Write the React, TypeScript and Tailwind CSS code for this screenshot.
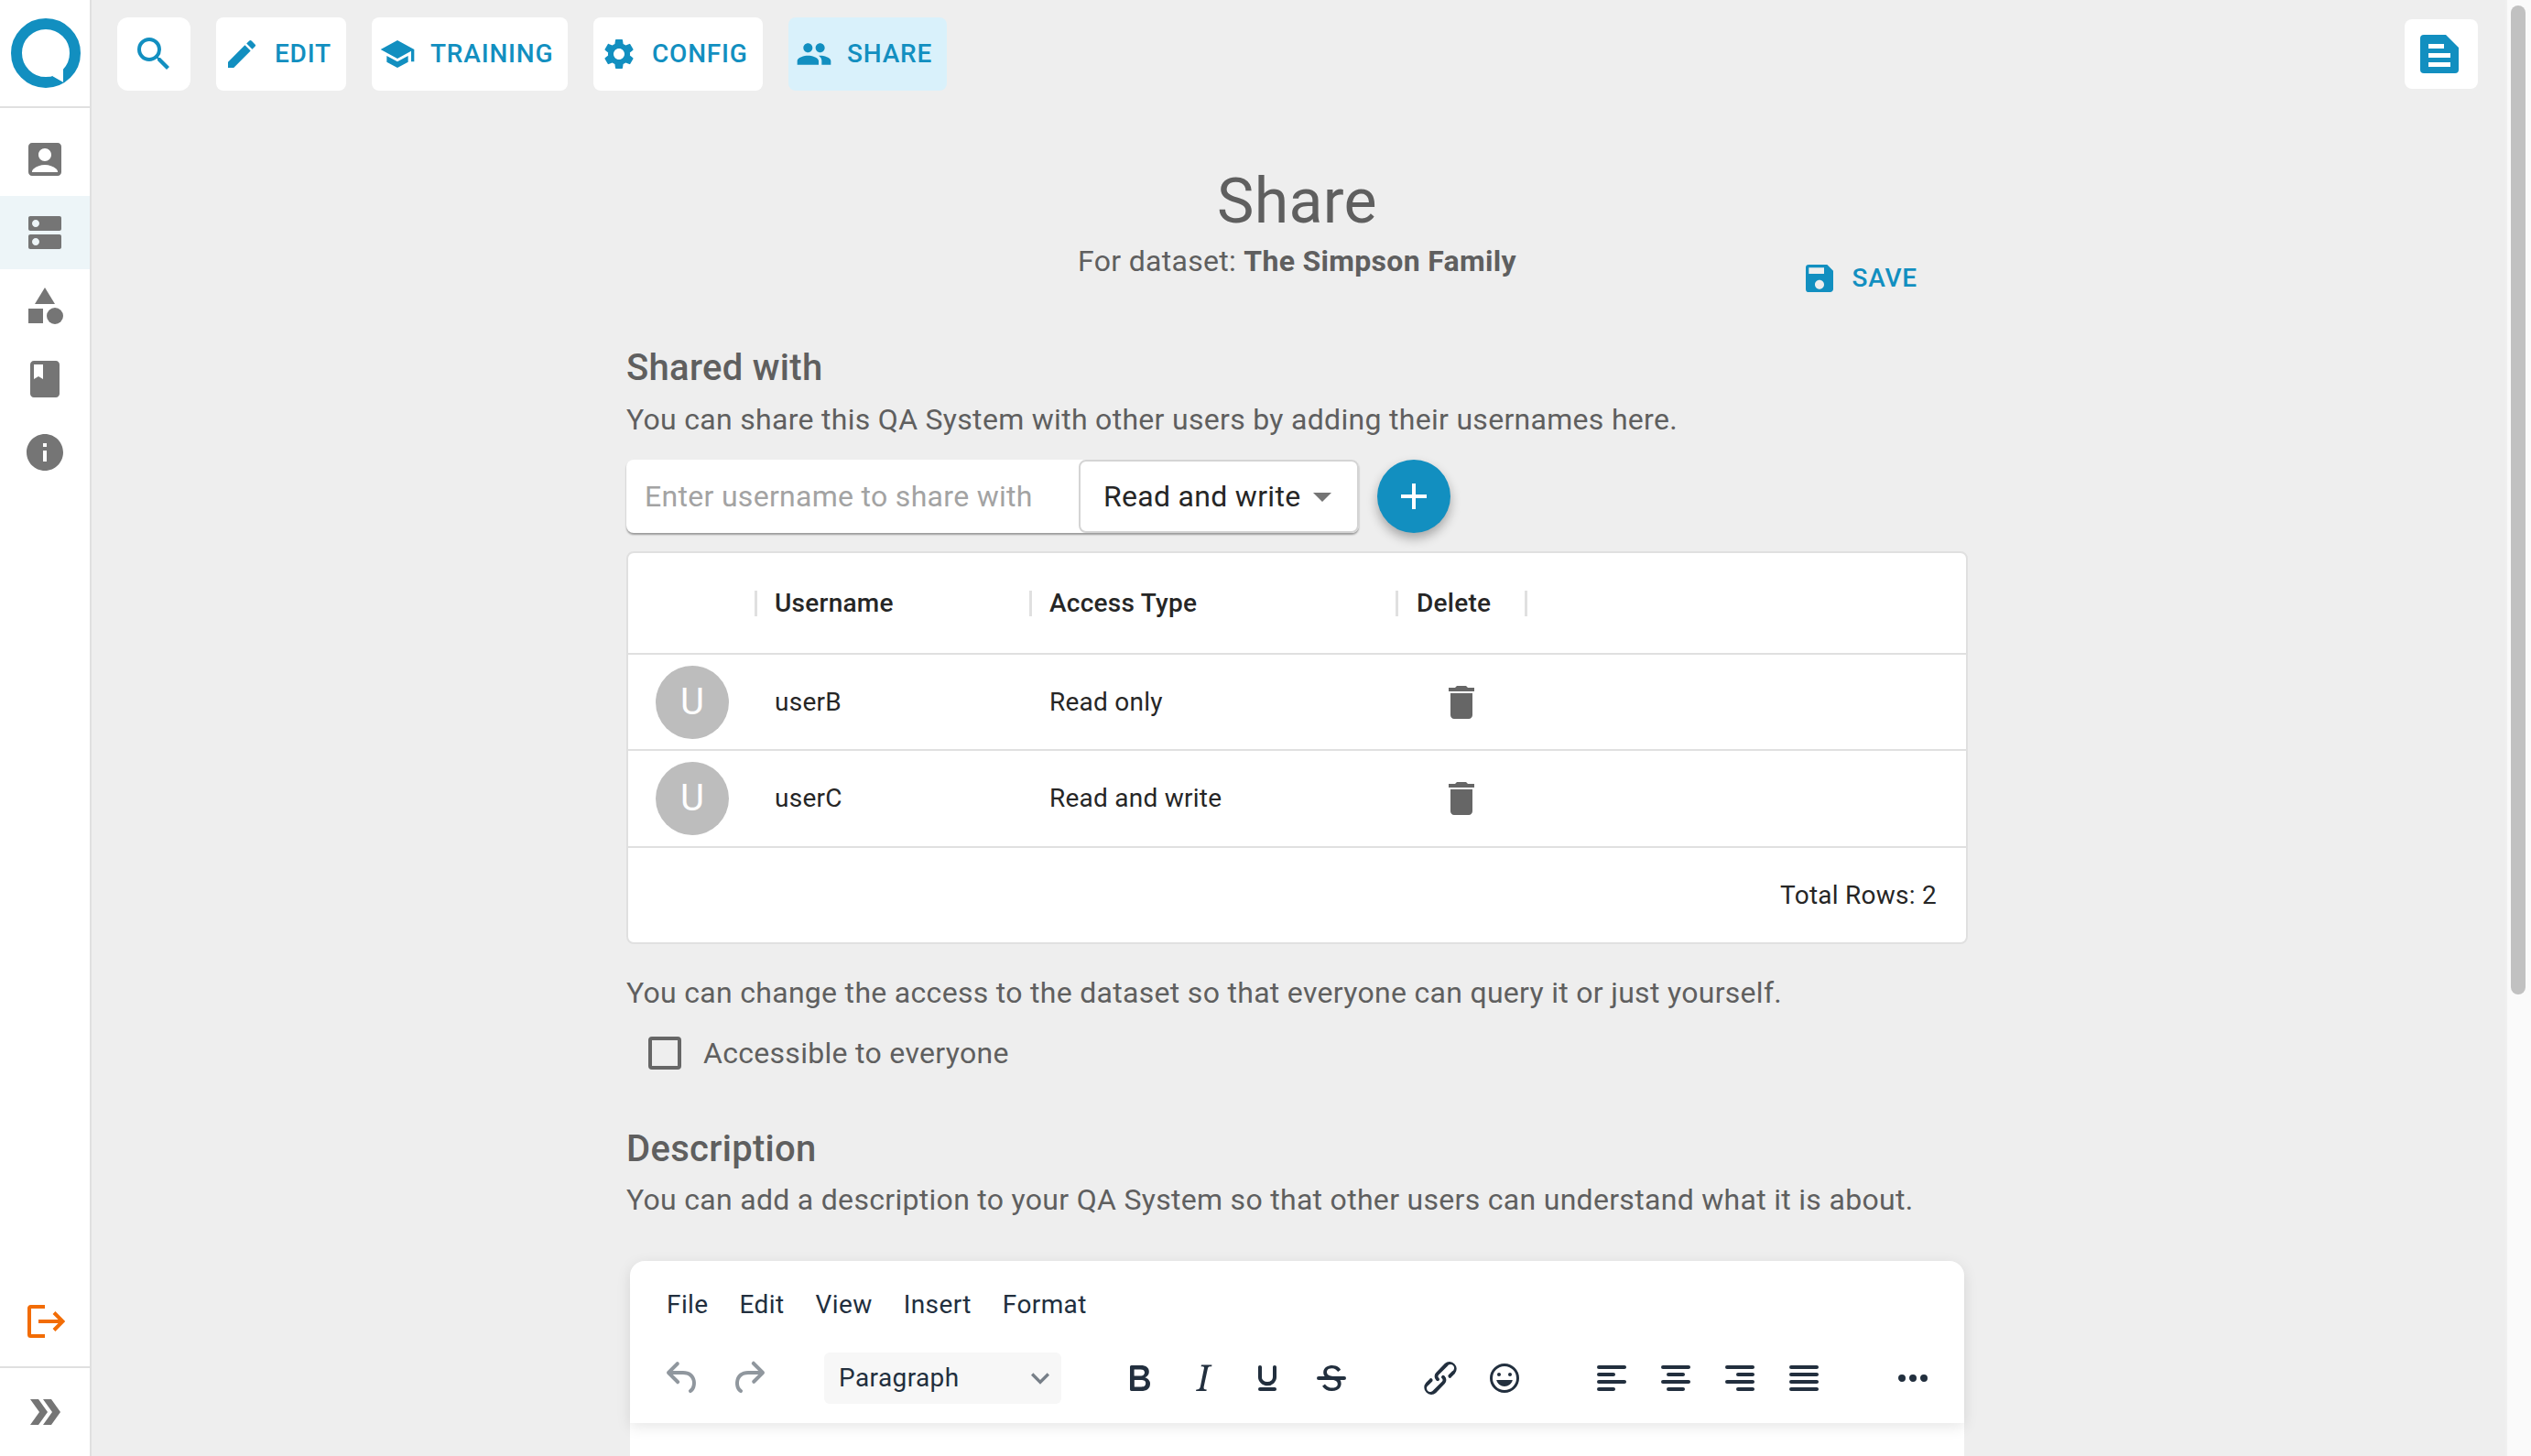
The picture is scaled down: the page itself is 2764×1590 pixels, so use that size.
import React from 'react';
import {
    MdSearch, MdEdit, MdSchool, MdSettings, MdPeople, MdAccountBox, MdDns, MdCategory, MdBook, MdInfo,
    MdDoubleArrow, MdSave, MdDelete, MdAdd, MdArrowDropDown, MdKeyboardArrowDown,
} from 'react-icons/md';

const tiny: Record<string, string> = {
    undo: 'M6.4 8H12c3.7 0 6.2 2 6.8 5.1.6 2.7-.4 5.6-2.3 6.8a1 1 0 0 1-1-1.8c1.1-.6 1.8-2.7 1.4-4.6-.5-2.1-2.1-3.5-4.9-3.5H6.4l3.3 3.3a1 1 0 1 1-1.4 1.4l-5-5a1 1 0 0 1 0-1.4l5-5a1 1 0 0 1 1.4 1.4L6.4 8Z',
    redo: 'M17.6 10H12c-2.8 0-4.4 1.4-4.9 3.5-.4 2 .3 4 1.4 4.6a1 1 0 1 1-1 1.8c-2-1.2-2.9-4.1-2.3-6.8.6-3 3-5.1 6.8-5.1h5.6l-3.3-3.3a1 1 0 1 1 1.4-1.4l5 5a1 1 0 0 1 0 1.4l-5 5a1 1 0 0 1-1.4-1.4l3.3-3.3Z',
    bold: 'M7.8 19c-.3 0-.5 0-.6-.2l-.2-.5V5.7c0-.2 0-.4.2-.5l.6-.2h5c1.5 0 2.7.3 3.5 1 .7.6 1.1 1.4 1.1 2.5a3 3 0 0 1-.6 1.9c-.4.6-1 1-1.6 1.2.4.1.9.3 1.3.6s.8.7 1 1.2c.4.4.5 1 .5 1.6 0 1.3-.4 2.3-1.3 3-.8.7-2.1 1-3.8 1H7.8Zm5-8.3c.6 0 1.2-.1 1.6-.5.4-.3.6-.7.6-1.3 0-1.1-.8-1.7-2.3-1.7H9.3v3.5h3.4Zm.5 6c.7 0 1.3-.1 1.7-.4.4-.4.6-.9.6-1.5s-.2-1-.7-1.4c-.4-.3-1-.4-2-.4H9.4v3.8h4Z',
    italic: 'M16.7 4.7l-.1.9h-.3c-.6 0-1 0-1.4.3-.3.3-.4.6-.5 1.1l-2.1 9.8v.6c0 .5.4.8 1.4.8h.2l-.2.8H8l.2-.8h.2c1.1 0 1.8-.5 2-1.5l2-9.8.1-.5c0-.6-.4-.8-1.4-.8h-.3l.2-.9h5.8Z',
    underline: 'M16 5c.6 0 1 .4 1 1v5.5a4 4 0 0 1-.4 1.8l-1 1.4a5.3 5.3 0 0 1-5.5 1 5 5 0 0 1-1.6-1c-.5-.4-.8-.9-1.1-1.4a4 4 0 0 1-.4-1.8V6c0-.6.4-1 1-1s1 .4 1 1v5.5c0 .3 0 .6.2 1l.6.7a3.3 3.3 0 0 0 2.2.8 3.4 3.4 0 0 0 2.2-.8c.3-.2.4-.5.6-.8l.2-.9V6c0-.6.4-1 1-1ZM8 17h8c.6 0 1 .4 1 1s-.4 1-1 1H8a1 1 0 0 1 0-2Z',
    strike: 'M15.6 8.5c-.5-.7-1-1.1-1.3-1.3-.6-.4-1.3-.6-2-.6-2.7 0-2.8 1.7-2.8 2.1 0 1.6 1.8 2 3.2 2.3 4.4.9 4.6 2.8 4.6 3.9 0 1.4-.7 4.1-5 4.1A6.2 6.2 0 0 1 7 16.4l1.5-1.1c.4.6 1.6 2 3.7 2 1.6 0 2.5-.4 3-1.2.4-.8.3-2-.8-2.6-.7-.4-1.6-.7-2.9-1-1-.2-3.9-.8-3.9-3.6C7.6 6 10.3 5 12.4 5c2.9 0 4.2 1.6 4.7 2.4l-1.5 1.1ZM5 11h14a1 1 0 0 1 0 2H5a1 1 0 0 1 0-2Z',
    link: 'M6.2 12.3a1 1 0 0 1 1.4 1.4l-2 2a2 2 0 1 0 2.6 2.8l4.8-4.8a1 1 0 0 0 0-1.4 1 1 0 1 1 1.4-1.3 2.9 2.9 0 0 1 0 4L9.6 20a3.9 3.9 0 0 1-5.5-5.5l2-2Zm11.6-.6a1 1 0 0 1-1.4-1.4l2-2a2 2 0 1 0-2.6-2.8L11 10.3a1 1 0 0 0 0 1.4A1 1 0 1 1 9.6 13a2.9 2.9 0 0 1 0-4L14.4 4a3.9 3.9 0 0 1 5.5 5.5l-2 2Z',
    emoji: 'M9 11c.6 0 1-.4 1-1s-.4-1-1-1a1 1 0 0 0-1 1c0 .6.4 1 1 1Zm6 0c.6 0 1-.4 1-1s-.4-1-1-1a1 1 0 0 0-1 1c0 .6.4 1 1 1Zm-3 5.5c2.1 0 4-1.5 4.4-3.5H7.6c.5 2 2.3 3.5 4.4 3.5ZM12 4a8 8 0 1 0 0 16 8 8 0 0 0 0-16Zm0 14.5a6.5 6.5 0 1 1 0-13 6.5 6.5 0 0 1 0 13Z',
    left: 'M5 5h14c.6 0 1 .4 1 1s-.4 1-1 1H5a1 1 0 1 1 0-2Zm0 4h8c.6 0 1 .4 1 1s-.4 1-1 1H5a1 1 0 1 1 0-2Zm0 8h8c.6 0 1 .4 1 1s-.4 1-1 1H5a1 1 0 0 1 0-2Zm0-4h14c.6 0 1 .4 1 1s-.4 1-1 1H5a1 1 0 0 1 0-2Z',
    center: 'M5 5h14c.6 0 1 .4 1 1s-.4 1-1 1H5a1 1 0 1 1 0-2Zm3 4h8c.6 0 1 .4 1 1s-.4 1-1 1H8a1 1 0 1 1 0-2Zm0 8h8c.6 0 1 .4 1 1s-.4 1-1 1H8a1 1 0 0 1 0-2Zm-3-4h14c.6 0 1 .4 1 1s-.4 1-1 1H5a1 1 0 0 1 0-2Z',
    right: 'M5 5h14c.6 0 1 .4 1 1s-.4 1-1 1H5a1 1 0 1 1 0-2Zm6 4h8c.6 0 1 .4 1 1s-.4 1-1 1h-8a1 1 0 0 1 0-2Zm0 8h8c.6 0 1 .4 1 1s-.4 1-1 1h-8a1 1 0 0 1 0-2Zm-6-4h14c.6 0 1 .4 1 1s-.4 1-1 1H5a1 1 0 0 1 0-2Z',
    justify: 'M5 5h14c.6 0 1 .4 1 1s-.4 1-1 1H5a1 1 0 1 1 0-2Zm0 4h14c.6 0 1 .4 1 1s-.4 1-1 1H5a1 1 0 1 1 0-2Zm0 4h14c.6 0 1 .4 1 1s-.4 1-1 1H5a1 1 0 0 1 0-2Zm0 4h14c.6 0 1 .4 1 1s-.4 1-1 1H5a1 1 0 0 1 0-2Z',
    more: 'M6 10a2 2 0 0 0-2 2c0 1.1.9 2 2 2a2 2 0 0 0 2-2 2 2 0 0 0-2-2Zm12 0a2 2 0 0 0-2 2c0 1.1.9 2 2 2a2 2 0 0 0 2-2 2 2 0 0 0-2-2Zm-6 0a2 2 0 0 0-2 2c0 1.1.9 2 2 2a2 2 0 0 0 2-2 2 2 0 0 0-2-2Z',
};

const TinyIcon = ({ name, muted }: { name: string; muted?: boolean }) => (
    <svg viewBox="0 0 24 24" className={`w-12 h-12 ${muted ? 'fill-[#222f3e]/50' : 'fill-[#222f3e]'}`}>
        <path d={tiny[name]} />
    </svg>
);

const Logo = () => (
    <svg viewBox="0 0 76 76" className="w-[76px] h-[76px]">
        <circle cx="38" cy="38" r="32" fill="none" stroke="#128fc0" strokeWidth="12" />
        <path d="M45 63 L57 70 L57 55 Z" fill="#fff" />
        <path d="M45 63.500 L57 70 L51 72 L42 73 Z" fill="#128fc0" />
    </svg>
);

const LogoutIcon = () => (
    <svg viewBox="0 0 44 40" className="w-11 h-10" fill="none" stroke="#f26c05" strokeWidth="4">
        <path d="M22 4H6.500a1.500 1.500 0 0 0-1.500 1.500v29A1.500 1.500 0 0 0 6.500 36H22" />
        <path d="M15 22h25M32 12.500l9.500 9.500-9.500 9.500" transform="translate(0 -2)" />
    </svg>
);

const DocIcon = () => (
    <svg viewBox="0 0 42 42" className="w-[42px] h-[42px]">
        <path d="M4 0h24l14 14v24a4 4 0 0 1-4 4H4a4 4 0 0 1-4-4V4a4 4 0 0 1 4-4Z" fill="#128fc0" />
        <path d="M9 10h17v5H9zM9 20h24v5H9zM9 30h24v5H9z" fill="#fff" />
    </svg>
);

const navIcons = [MdAccountBox, MdDns, MdCategory, MdBook, MdInfo];

const tabs = [
    { label: 'EDIT', icon: MdEdit, width: 'w-[142px]' },
    { label: 'TRAINING', icon: MdSchool, width: 'w-[214px]' },
    { label: 'CONFIG', icon: MdSettings, width: 'w-[185px]' },
    { label: 'SHARE', icon: MdPeople, width: 'w-[173px]', active: true },
];

const rows = [
    { name: 'userB', access: 'Read only', height: 'h-[105px]' },
    { name: 'userC', access: 'Read and write', height: 'h-[106px]' },
];

const menus = ['File', 'Edit', 'View', 'Insert', 'Format'];

const Separator = () => <div className="w-[3px] h-7 bg-[#e0e0e0] shrink-0" />;

export default function App() {
    return (
        <div className="flex w-[2764px] h-[1590px] overflow-hidden bg-[#eeeeee] font-['Roboto',sans-serif] text-[#5f5f5f]">
            {/* left rail */}
            <aside className="w-[100px] shrink-0 bg-white border-r-2 border-[#e0e0e0] flex flex-col">
                <div className="h-[118px] border-b-2 border-[#e0e0e0] pl-3 pt-5 shrink-0">
                    <Logo />
                </div>
                <nav className="pt-4 flex flex-col">
                    {navIcons.map((Icon, i) => (
                        <div key={i} className={`h-20 flex items-center justify-center ${i === 1 ? 'bg-[#edf5f8]' : ''}`}>
                            <Icon className="w-12 h-12 text-[#757575]" />
                        </div>
                    ))}
                </nav>
                <div className="mt-auto h-[69px] flex items-start justify-center">
                    <LogoutIcon />
                </div>
                <div className="h-[98px] border-t-2 border-[#e0e0e0] flex items-center justify-center">
                    <MdDoubleArrow className="w-12 h-12 text-[#757575]" />
                </div>
            </aside>

            <main className="flex-1 min-w-0 flex flex-col">
                {/* top bar */}
                <div className="flex items-start pt-[19px] pl-7 pr-[30px] shrink-0">
                    <div className="flex gap-7">
                        <button className="w-20 h-20 rounded-xl bg-white flex items-center justify-center">
                            <MdSearch className="w-12 h-12 text-[#128fc0]" />
                        </button>
                        {tabs.map((t) => {
                            const Icon = t.icon;
                            return (
                                <button
                                    key={t.label}
                                    className={`${t.width} h-20 rounded-lg flex items-center gap-4 pl-2 text-[#128fc0] text-[28px] font-medium tracking-[0.8px] ${t.active ? 'bg-[#d9f1fb]' : 'bg-white'}`}
                                >
                                    <Icon className="w-10 h-10 shrink-0" />
                                    {t.label}
                                </button>
                            );
                        })}
                    </div>
                    <button className="ml-auto mt-0.5 w-20 h-[76px] pr-1 rounded-lg bg-white flex items-center justify-center">
                        <DocIcon />
                    </button>
                </div>

                {/* page */}
                <div className="w-[1465px] ml-[584px] flex flex-col tracking-[0.3px]">
                    <div className="grid grid-cols-[1fr_auto_1fr] pt-[81px]">
                        <div />
                        <div className="flex flex-col items-center">
                            <h1 className="text-[68px] leading-[80px]">Share</h1>
                            <p className="text-[32px] leading-[44px] mt-[3px]">
                                For dataset: <span className="font-bold">The Simpson Family</span>
                            </p>
                        </div>
                        <div className="flex justify-end items-end pr-[55px]">
                            <button className="flex items-center gap-4 text-[#128fc0] text-[28px] font-medium tracking-[0.8px] mb-[-18px]">
                                <MdSave className="w-10 h-10" />
                                SAVE
                            </button>
                        </div>
                    </div>

                    <h2 className="text-[40px] leading-[48px] font-medium mt-[71px]">Shared with</h2>
                    <p className="text-[32px] leading-[44px] mt-[10px]">You can share this QA System with other users by adding their usernames here.</p>

                    <div className="flex items-center mt-[22px]">
                        <div className="w-[800px] h-20 bg-white rounded-lg shadow-[0_2px_2px_rgba(0,0,0,0.35)] flex">
                            <input
                                readOnly
                                placeholder="Enter username to share with"
                                className="flex-1 min-w-0 pl-5 bg-transparent outline-none text-[32px] tracking-[0.3px] placeholder:text-[#a3a3a3]"
                            />
                            <div className="w-[306px] h-20 rounded-lg border-2 border-[#d4d4d4] flex items-center pl-[25px] text-[32px] text-[#262626]">
                                Read and write
                                <MdArrowDropDown className="w-12 h-12 text-[#757575]" />
                            </div>
                        </div>
                        <button className="w-20 h-20 ml-5 rounded-full bg-[#128fc0] text-white flex items-center justify-center shadow-[0_6px_12px_rgba(0,0,0,0.3)]">
                            <MdAdd className="w-12 h-12" />
                        </button>
                    </div>

                    {/* table */}
                    <div className="mt-5 bg-white border-2 border-[#e0e0e0] rounded-lg text-[28px] text-[#262626] tracking-[0.25px]">
                        <div className="h-[111px] flex items-center border-b-2 border-[#e0e0e0] font-medium">
                            <div className="w-[141px] flex justify-end"><Separator /></div>
                            <div className="w-[300px] pl-[19px] flex items-center justify-between">Username<Separator /></div>
                            <div className="w-[400px] pl-[19px] flex items-center justify-between">Access Type<Separator /></div>
                            <div className="w-[141px] pl-5 flex items-center justify-between">Delete<Separator /></div>
                        </div>
                        {rows.map((r) => (
                            <div key={r.name} className={`${r.height} flex items-center border-b-2 border-[#e0e0e0]`}>
                                <div className="w-[140px] pl-[30px]">
                                    <div className="w-20 h-20 rounded-full bg-[#bdbdbd] text-white text-[40px] flex items-center justify-center">U</div>
                                </div>
                                <div className="w-[300px] pl-5">{r.name}</div>
                                <div className="w-[400px] pl-5">{r.access}</div>
                                <div className="w-[140px] pl-[46px]">
                                    <MdDelete className="w-12 h-12 text-[#666666]" />
                                </div>
                            </div>
                        ))}
                        <div className="h-[103px] flex items-center justify-end pr-8">Total Rows: 2</div>
                    </div>

                    <p className="text-[32px] leading-[44px] mt-[31px]">You can change the access to the dataset so that everyone can query it or just yourself.</p>
                    <label className="flex items-center mt-5 ml-6 text-[32px]">
                        <span className="w-9 h-9 rounded-[4px] border-[4px] border-[#666666] shrink-0" />
                        <span className="ml-6">Accessible to everyone</span>
                    </label>

                    <h2 className="text-[40px] leading-[48px] font-medium mt-[57px]">Description</h2>
                    <p className="text-[32px] leading-[44px] mt-[9px]">You can add a description to your QA System so that other users can understand what it is about.</p>

                    {/* editor */}
                    <div className="mt-[45px] mx-[4px] h-[300px] bg-white rounded-t-2xl text-[#222f3e] text-[28px] tracking-[0.4px]">
                        <div className="h-[177px] rounded-t-2xl shadow-[0_4px_16px_rgba(0,0,0,0.1)]">
                            <div className="flex gap-[34px] pl-10 pt-[30px] leading-9">
                                {menus.map((m) => <span key={m}>{m}</span>)}
                            </div>
                            <div className="flex items-center pl-[34px] mt-[34px]">
                                <div className="flex gap-[23px]">
                                    <TinyIcon name="undo" muted />
                                    <TinyIcon name="redo" muted />
                                </div>
                                <div className="w-[259px] h-14 ml-[59px] rounded-md bg-[#f7f7f7] flex items-center justify-between pl-4 pr-[3px]">
                                    Paragraph
                                    <MdKeyboardArrowDown className="w-10 h-10 text-[#222f3e]/60" />
                                </div>
                                <div className="flex gap-[22px] ml-[61px]">
                                    <TinyIcon name="bold" />
                                    <TinyIcon name="italic" />
                                    <TinyIcon name="underline" />
                                    <TinyIcon name="strike" />
                                </div>
                                <div className="flex gap-[22px] ml-[71px]">
                                    <TinyIcon name="link" />
                                    <TinyIcon name="emoji" />
                                </div>
                                <div className="flex gap-[22px] ml-[69px]">
                                    <TinyIcon name="left" />
                                    <TinyIcon name="center" />
                                    <TinyIcon name="right" />
                                    <TinyIcon name="justify" />
                                </div>
                                <div className="ml-[71px]"><TinyIcon name="more" /></div>
                            </div>
                        </div>
                    </div>
                </div>
            </main>

            {/* scrollbar */}
            <div className="w-7 shrink-0 bg-[#fafafa] border-l-2 border-[#f0f0f0] pl-1 pt-[6px]">
                <div className="w-4 h-[1080px] rounded-lg bg-[#c1c1c1]" />
            </div>
        </div>
    );
}
